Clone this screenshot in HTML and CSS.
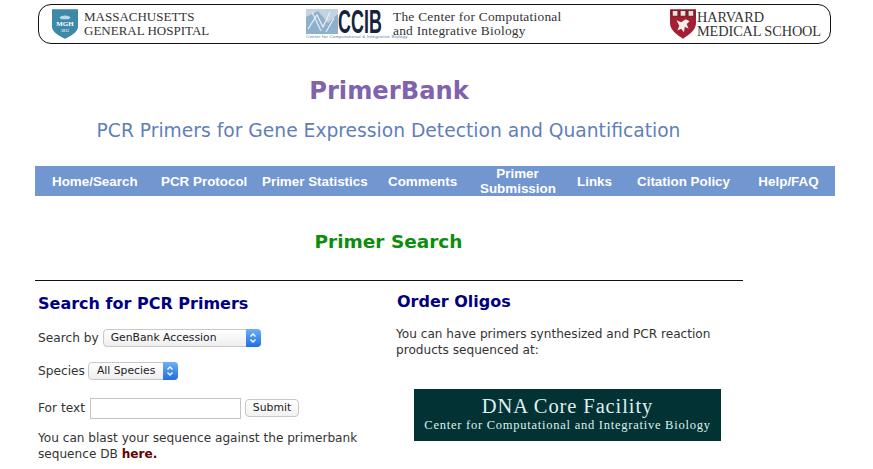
FILE: index.html
```html
<!DOCTYPE html>
<html lang="en">
<head>
<meta charset="utf-8">
<title>PrimerBank</title>
<link rel="stylesheet" href="styles.css">
</head>
<body>
<header class="banner">
  <div class="org org-mgh">
    <svg class="shield-mgh" viewBox="0 0 28 32" width="26" height="30" aria-hidden="true">
      <path d="M0 0H28V19C28 25 20 29 14 32C8 29 0 25 0 19Z" fill="#3f89a8"/>
      <path d="M8 9C10 6 18 6 20 9L18 11H10Z" fill="#bcd8e4"/>
      <text x="14" y="18" class="mgh-mark">MGH</text>
      <text x="14" y="25" class="mgh-year">1811</text>
    </svg>
    <span>MASSACHUSETTS<br>GENERAL HOSPITAL</span>
  </div>
  <div class="org org-ccib">
    <div class="ccib-logo">
      <div class="ccib-top">
        <svg viewBox="0 0 32 25" width="32" height="25" aria-hidden="true">
          <rect width="32" height="25" fill="#c3d3e0"/>
          <path d="M0 8L12 2L22 14L32 5V25H0Z" fill="#8fb0cb"/>
          <path d="M2 20L11 6L17 18L24 3M6 3L15 22M20 23L28 9" stroke="#e8eff5" stroke-width="1.2" fill="none"/>
        </svg>
        <b>CCIB</b>
      </div>
      <small>Center for Computational &amp; Integrative Biology</small>
    </div>
    <span>The Center for Computational<br>and Integrative Biology</span>
  </div>
  <div class="org org-hms">
    <svg viewBox="0 0 28 32" width="26" height="32" aria-hidden="true">
      <path d="M0 0H28V15C28 23 20 28 14 32C8 28 0 23 0 15Z" fill="#a31f34"/>
      <path d="M1 1H27V8H1Z" fill="#7e1d2c"/>
      <path d="M3 2H8V7H3ZM11.500 2H16.500V7H11.500ZM20 2H25V7H20Z" fill="#e9e4dc"/>
      <path d="M7 12L12 14L17 11L21 13L18 16L20 21L16 19L15 25L12 21L8 23L10 18Z" fill="#f2eeea"/>
    </svg>
    <span>HARVARD<br>MEDICAL SCHOOL</span>
  </div>
</header>

<h1 class="title">PrimerBank</h1>
<h2 class="subtitle">PCR Primers for Gene Expression Detection and Quantification</h2>

<nav class="nav">
  <a class="nav-home">Home/Search</a>
  <a class="nav-protocol">PCR Protocol</a>
  <a class="nav-stats">Primer Statistics</a>
  <a class="nav-comments">Comments</a>
  <a class="nav-submission">Primer<br>Submission</a>
  <a class="nav-links">Links</a>
  <a class="nav-citation">Citation Policy</a>
  <a class="nav-help">Help/FAQ</a>
</nav>

<h2 class="page-title">Primer Search</h2>
<hr class="rule">

<main class="columns">
  <section class="col-left">
    <h3 class="heading heading-search">Search for PCR Primers</h3>
    <div class="field field-by">
      <label>Search by</label>
      <span class="select select-wide">GenBank Accession<i class="stepper"><svg viewBox="0 0 8 12" width="8" height="12" aria-hidden="true"><path d="M1.500 4.500L4 2L6.500 4.500M1.500 7.500L4 10L6.500 7.500" fill="none" stroke="#fff" stroke-width="1.300"/></svg></i></span>
    </div>
    <div class="field field-species">
      <label>Species</label>
      <span class="select select-narrow">All Species<i class="stepper"><svg viewBox="0 0 8 12" width="8" height="12" aria-hidden="true"><path d="M1.500 4.500L4 2L6.500 4.500M1.500 7.500L4 10L6.500 7.500" fill="none" stroke="#fff" stroke-width="1.300"/></svg></i></span>
    </div>
    <div class="field field-text">
      <label>For text</label>
      <input class="text-input" type="text" aria-label="For text">
      <button class="submit" type="button">Submit</button>
    </div>
    <p class="note">You can blast your sequence against the primerbank sequence DB <a class="here">here.</a></p>
  </section>
  <section class="col-right">
    <h3 class="heading heading-order">Order Oligos</h3>
    <p class="order-text">You can have primers synthesized and PCR reaction products sequenced at:</p>
    <div class="core">
      <div class="core-name">DNA Core Facility</div>
      <div class="core-sub">Center for Computational and Integrative Biology</div>
    </div>
  </section>
</main>
</body>
</html>
```
FILE: styles.css
```css
* { box-sizing: border-box; }
html, body { margin: 0; background: #fff; }
body {
  width: 873px;
  height: 469px;
  overflow: hidden;
  font-family: "DejaVu Sans", Verdana, sans-serif;
  color: #333;
}
.banner {
  display: flex;
  align-items: center;
  width: 793px;
  height: 40px;
  margin: 4px 0 0 38px;
  padding: 0 9px 0 13px;
  border: 1px solid #111;
  border-radius: 13px;
  font-family: "Liberation Serif", serif;
  color: #333;
}
.org { display: flex; align-items: center; flex: none; }
.org span { line-height: 14px; white-space: nowrap; }
.org-mgh { width: 254px; gap: 6px; font-size: 13px; }
.mgh-mark { font: bold 7.500px "Liberation Serif", serif; fill: #fff; text-anchor: middle; }
.mgh-year { font: 4px "Liberation Sans", sans-serif; fill: #fff; text-anchor: middle; }
.org-ccib { width: 364px; gap: 11px; font-size: 13.400px; letter-spacing: .24px; }
.ccib-logo { width: 76px; display: flex; flex-direction: column; }
.ccib-top { display: flex; align-items: center; height: 25px; }
.ccib-top b {
  display: block;
  width: 44px;
  font: bold 33px/25px "Liberation Sans", sans-serif;
  color: #16233c;
  transform: scaleX(.54);
  transform-origin: left;
}
.ccib-logo small { font: 4.400px/5px "Liberation Sans", sans-serif; color: #4f7ca8; white-space: nowrap; }
.org-hms { gap: 1px; font-size: 14.300px; letter-spacing: -.1px; }
.title {
  margin: 31px 0 0;
  text-align: center;
  font: bold 24.200px/32px "DejaVu Sans", Verdana, sans-serif;
  color: #7f64ad;
  width: 778px;
}
.subtitle {
  margin: 11px 0 0;
  width: 777px;
  text-align: center;
  font: 400 18.700px/26px "DejaVu Sans", Verdana, sans-serif;
  color: #5f7fb8;
}
.nav {
  display: flex;
  align-items: center;
  width: 800px;
  height: 30px;
  margin: 22px 0 0 35px;
  background: #7296cf;
  color: #fff;
  font: bold 13.400px/15px "Liberation Sans", Arial, sans-serif;
  text-align: center;
}
.nav a { display: block; flex: none; white-space: nowrap; }
.nav-home { margin-left: 17px; width: 85px; }
.nav-protocol { margin-left: 24px; width: 86px; }
.nav-stats { margin-left: 15px; width: 105px; }
.nav-comments { margin-left: 21px; width: 69px; }
.nav-submission { margin-left: 23px; width: 75px; }
.nav-links { margin-left: 22px; width: 35px; }
.nav-citation { margin-left: 25px; width: 93px; }
.nav-help { margin-left: 28px; width: 61px; }
.page-title {
  margin: 33px 0 0;
  padding-top: 1px;
  width: 777px;
  text-align: center;
  font: bold 18.500px/24px "DejaVu Sans", Verdana, sans-serif;
  color: #0b8f0b;
}
.rule {
  width: 708px;
  height: 1px;
  margin: 26px 0 0 35px;
  border: 0;
  background: #111;
}
.columns { display: flex; margin: 0 0 0 38px; }
.col-left { width: 358px; }
.col-right { width: 340px; }
.heading {
  margin: 0;
  font: bold 16px/20px "DejaVu Sans", Verdana, sans-serif;
  color: #00007f;
}
.heading-search { margin-top: 13px; }
.heading-order { margin-top: 11px; margin-left: 1px; }
.field { display: flex; align-items: center; font-size: 12.200px; }
.field-by { margin-top: 15px; height: 18px; gap: 4px; }
.field-species { margin-top: 15px; height: 18px; gap: 3px; }
.field-text { margin-top: 17px; height: 22px; gap: 5px 4px; }
.field-text label { margin-right: 1px; }
.select {
  position: relative;
  display: block;
  height: 18px;
  padding-left: 8px;
  border: 1px solid #c8c8c8;
  border-radius: 4px;
  background: linear-gradient(#fff, #eee);
  font: 10.800px/16px "DejaVu Sans", Verdana, sans-serif;
  color: #222;
}
.select-wide { width: 158px; padding-left: 7px; }
.select-narrow { width: 90px; }
.stepper {
  position: absolute;
  top: -1px;
  right: -1px;
  bottom: -1px;
  width: 15px;
  display: flex;
  align-items: center;
  justify-content: center;
  border-radius: 0 4px 4px 0;
  background: linear-gradient(#6cb0f5, #1f6fe0);
}
.text-input {
  width: 151px;
  height: 21px;
  margin: 0;
  padding: 0;
  border: 1px solid #c4c4c4;
  background: #fff;
}
.submit {
  width: 54px;
  height: 18px;
  margin-left: 0;
  padding: 0;
  border: 1px solid #c8c8c8;
  border-radius: 4px;
  background: linear-gradient(#fff, #f1f1f1);
  font: 10.800px/16px "DejaVu Sans", Verdana, sans-serif;
  color: #222;
}
.note {
  width: 340px;
  margin: 11px 0 0;
  font-size: 12.120px;
  line-height: 16px;
}
.here { font-weight: bold; color: #660000; }
.order-text {
  margin: 14px 0 0;
  width: 330px;
  font-size: 12.120px;
  line-height: 16px;
}
.core {
  width: 307px;
  height: 52px;
  margin: 31px 0 0 18px;
  background: #023233;
  color: #dff0ee;
  font-family: "Liberation Serif", serif;
  text-align: center;
}
.core-name { padding-top: 5px; font-size: 20.500px; line-height: 24px; letter-spacing: .9px; }
.core-sub { font-size: 12.500px; line-height: 15px; letter-spacing: .75px; }
```
